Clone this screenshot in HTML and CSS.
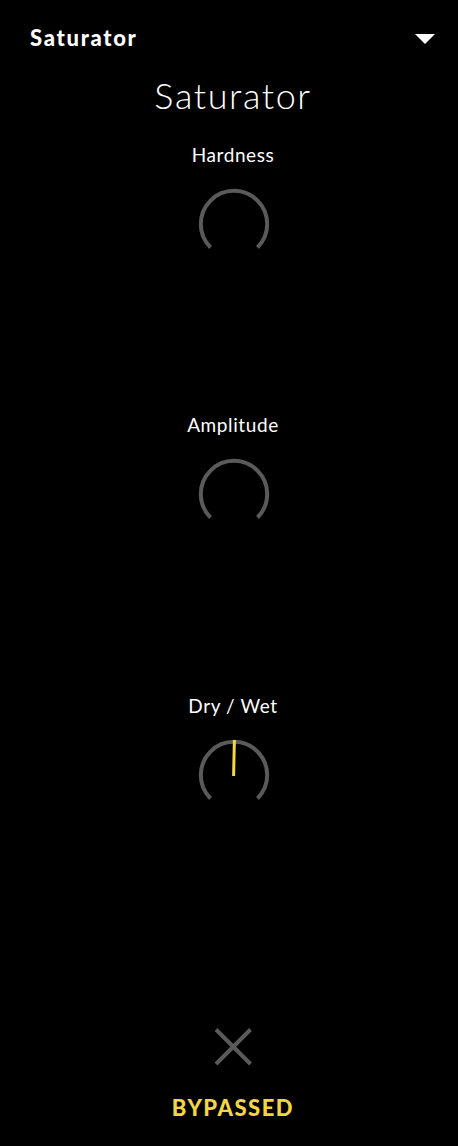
FILE: index.html
```html
<!DOCTYPE html>
<html>
<head>
<meta charset="utf-8">
<link rel="stylesheet" href="styles.css">
</head>
<body>
<div class="app">
  <header class="topbar">
    <span class="topbar-title">Saturator</span>
    <span class="caret"></span>
  </header>
  <main class="content">
    <h1 class="title">Saturator</h1>

    <section class="param param-first">
      <div class="param-label">Hardness</div>
      <svg class="knob" width="80" height="80" viewBox="0 0 80 80">
        <path d="M16.5 63.5 A33.2 33.2 0 1 1 63.5 63.5" fill="none" stroke="#5a5a5a" stroke-width="4"/>
      </svg>
    </section>

    <section class="param param-second">
      <div class="param-label">Amplitude</div>
      <svg class="knob" width="80" height="80" viewBox="0 0 80 80">
        <path d="M16.5 63.5 A33.2 33.2 0 1 1 63.5 63.5" fill="none" stroke="#5a5a5a" stroke-width="4"/>
      </svg>
    </section>

    <section class="param param-third">
      <div class="param-label">Dry / Wet</div>
      <svg class="knob" width="80" height="80" viewBox="0 0 80 80">
        <path d="M16.5 63.5 A33.2 33.2 0 1 1 63.5 63.5" fill="none" stroke="#5a5a5a" stroke-width="4"/>
        <line x1="39.6" y1="41" x2="40.4" y2="5" stroke="#f3d641" stroke-width="3"/>
      </svg>
    </section>

    <footer class="bypass">
      <svg class="bypass-icon" width="40" height="40" viewBox="0 0 40 40">
        <path d="M3 2.5 L37.5 37 M37.5 2.5 L3 37" stroke="#5a5a5a" stroke-width="4" fill="none"/>
      </svg>
      <div class="bypass-label">BYPASSED</div>
    </footer>
  </main>
</div>
</body>
</html>
```

FILE: styles.css
```css
html, body {
  margin: 0;
  padding: 0;
  background: #000;
}

.app {
  width: 458px;
  height: 1146px;
  background: #000;
  color: #fff;
  font-family: Lato, "Liberation Sans", sans-serif;
  display: flex;
  flex-direction: column;
}

.topbar {
  height: 76px;
  display: flex;
  align-items: center;
  justify-content: space-between;
  padding: 0 23px 0 30px;
}

.topbar-title {
  font-size: 22px;
  font-weight: 900;
  line-height: 24px;
  letter-spacing: 1.7px;
}

.caret {
  width: 0;
  height: 0;
  border-left: 10px solid transparent;
  border-right: 10px solid transparent;
  border-top: 10px solid #fff;
  margin-top: 1px;
}

.content {
  display: flex;
  flex-direction: column;
  align-items: center;
  padding-left: 8px;
}

.title {
  margin: -3px 0 3px;
  font-size: 36px;
  font-weight: 300;
  line-height: 44px;
  letter-spacing: 1.6px;
}

.param {
  display: flex;
  flex-direction: column;
  align-items: center;
}

.param-first { margin-top: 23px; }
.param-second { margin-top: 149px; }
.param-third { margin-top: 160px; }

.param-label {
  font-size: 19px;
  line-height: 24px;
  font-weight: 400;
  letter-spacing: 0.6px;
}

.knob {
  display: block;
  margin-top: 17px;
  margin-left: 1px;
}

.bypass {
  margin-top: 212px;
  display: flex;
  flex-direction: column;
  align-items: center;
}

.bypass-icon {
  display: block;
  margin-left: 1px;
}

.bypass-label {
  margin-top: 29px;
  font-size: 22px;
  line-height: 24px;
  font-weight: 900;
  letter-spacing: 1.5px;
  color: #f3d641;
}
```
